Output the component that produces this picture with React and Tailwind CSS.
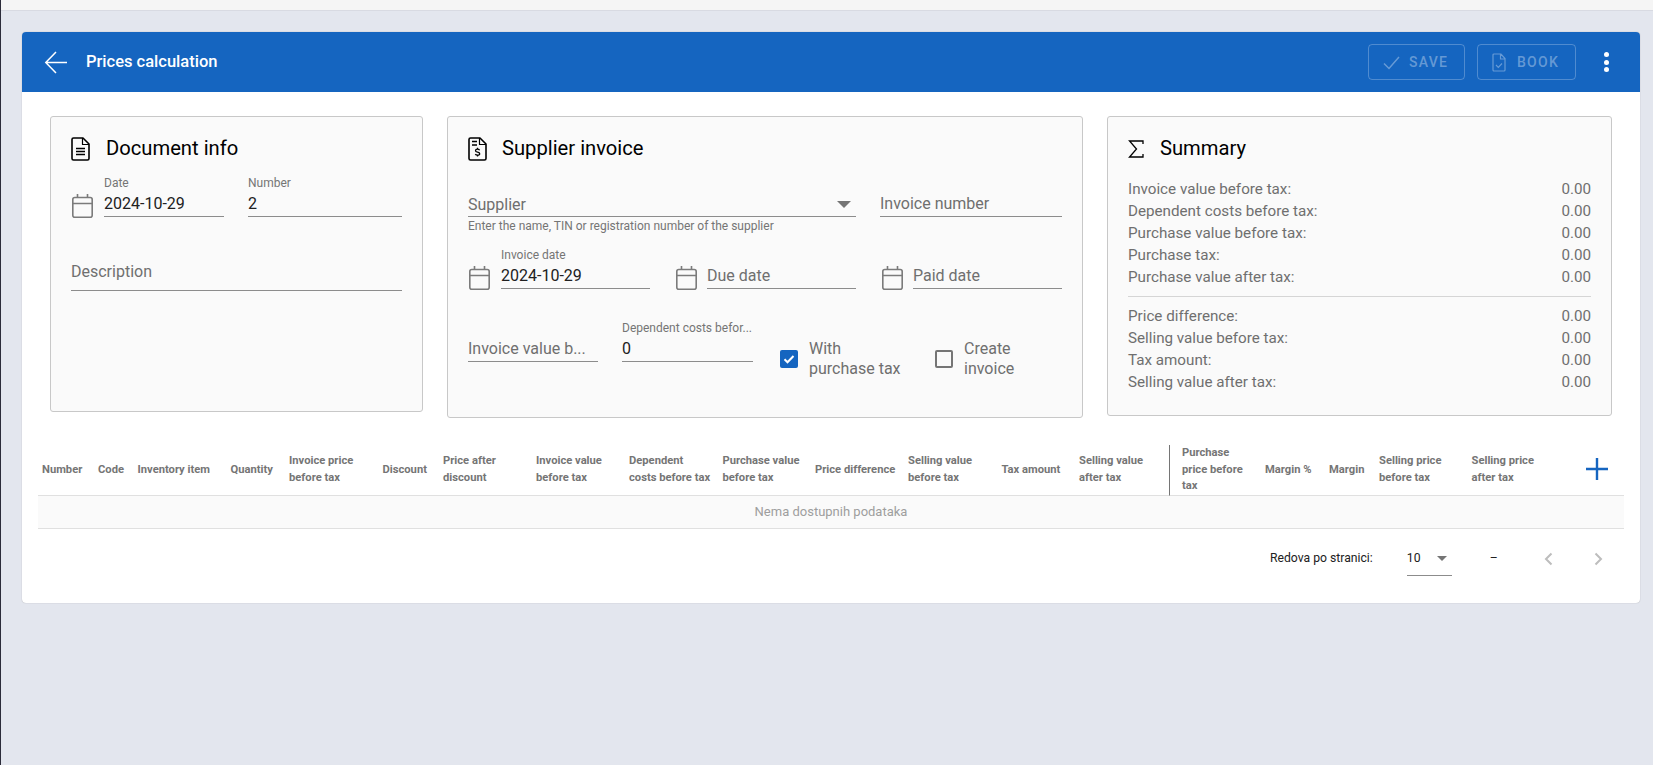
const font = { fontFamily: "Roboto, sans-serif" };

function CalendarIcon() {
  return (
    <svg width="21" height="24" viewBox="0 0 21 24" fill="none" stroke="#7b7b7b" strokeWidth="1.600" className="shrink-0">
      <rect x=".8" y="3.500" width="19.400" height="19.700" rx="2" />
      <path d="M.8 9.500h19.400M5.500 0v3.500M15.500 0v3.500" />
    </svg>
  );
}

function DocIcon() {
  return (
    <svg width="19" height="24" viewBox="0 0 19 24" fill="none" stroke="#000" strokeWidth="1.600" strokeLinejoin="round" className="shrink-0">
      <path d="M2.500 1h9.500l6 6v14.500a1.500 1.500 0 0 1-1.500 1.500h-14A1.500 1.500 0 0 1 1 21.500V2.500A1.500 1.500 0 0 1 2.500 1z" />
      <path d="M11.500 1v6.500H18" strokeWidth="1.200" />
      <path d="M5 11.500h9M5 14.500h9M5 17.500h9" strokeWidth="1.300" />
    </svg>
  );
}

function InvoiceIcon() {
  return (
    <svg width="19" height="24" viewBox="0 0 19 24" fill="none" stroke="#000" strokeWidth="1.600" strokeLinejoin="round" className="shrink-0">
      <path d="M2.500 1h9.500l6 6v14.500a1.500 1.500 0 0 1-1.500 1.500h-14A1.500 1.500 0 0 1 1 21.500V2.500A1.500 1.500 0 0 1 2.500 1z" />
      <path d="M11.500 1v6.500H18" strokeWidth="1.200" />
      <path d="M4 4.500h5M4 8h5" strokeWidth="1.300" />
      <path d="M11.600 13.200c-.4-.7-1.100-1-2.100-1-1.200 0-2 .6-2 1.500 0 2 4.200 1 4.200 3 0 .9-.9 1.500-2.200 1.500-1 0-1.800-.4-2.200-1.100M9.500 10.800v1.400M9.500 18.200v1.400" strokeWidth="1.300" />
    </svg>
  );
}

function Field({ label, value, placeholder, className }) {
  return (
    <div className={`flex flex-col justify-end border-b border-[#8c8c8c] min-w-0 ${className}`}>
      {label && <div className="text-[12px] leading-[14px] text-[#757575] mb-[2px] whitespace-nowrap">{label}</div>}
      {value && <div className="text-[16px] leading-[24px] text-[#212121]">{value}</div>}
      {placeholder && <div className="text-[16px] leading-[24px] text-[#6f6f6f] truncate">{placeholder}</div>}
    </div>
  );
}

function DateField({ label, value, placeholder, className, iconClass = "w-[32px]" }) {
  return (
    <div className={`flex items-end ${className}`}>
      <div className={`${iconClass} shrink-0 pl-[1px] mb-[-1px]`}>
        <CalendarIcon />
      </div>
      <Field label={label} value={value} placeholder={placeholder} className="flex-1" />
    </div>
  );
}

function Check({ checked, children, className }) {
  return (
    <div className={`flex items-center self-start mt-[18px] ${className}`}>
      {checked ? (
        <div className="w-[18px] h-[18px] rounded-[2px] bg-[#1565c0] flex items-center justify-center shrink-0">
          <svg width="14" height="14" viewBox="0 0 14 14" fill="none" stroke="#fff" strokeWidth="2">
            <path d="M2.500 7.200l3 3 6-6.200" />
          </svg>
        </div>
      ) : (
        <div className="w-[18px] h-[18px] rounded-[2px] border-2 border-[#757575] shrink-0" />
      )}
      <div className="ml-[11px] text-[16px] leading-[20px] text-[#6f6f6f]">{children}</div>
    </div>
  );
}

const summaryTop = [
  "Invoice value before tax:",
  "Dependent costs before tax:",
  "Purchase value before tax:",
  "Purchase tax:",
  "Purchase value after tax:",
];
const summaryBottom = [
  "Price difference:",
  "Selling value before tax:",
  "Tax amount:",
  "Selling value after tax:",
];

function SummaryRow({ label }) {
  return (
    <div className="flex justify-between text-[15.2px] leading-[22px] text-[#6f6f6f]">
      <span>{label}</span>
      <span>0.00</span>
    </div>
  );
}

function CardTitle({ icon, children, textClass }) {
  return (
    <div className="flex items-center h-[25px]">
      {icon}
      <h2 className={`text-[20.200px] leading-[25px] text-black ${textClass}`}>{children}</h2>
    </div>
  );
}

const columns = [
  ["Number", "w-[56px]"],
  ["Code", "w-[39.500px]"],
  ["Inventory item", "w-[93px]"],
  ["Quantity", "w-[58.500px]"],
  ["Invoice price\nbefore tax", "w-[93.500px]"],
  ["Discount", "w-[60.500px]"],
  ["Price after\ndiscount", "w-[93px]"],
  ["Invoice value\nbefore tax", "w-[93px]"],
  ["Dependent\ncosts before tax", "w-[93.500px]"],
  ["Purchase value\nbefore tax", "w-[92.500px]"],
  ["Price difference", "w-[93px]"],
  ["Selling value\nbefore tax", "w-[93.500px]"],
  ["Tax amount", "w-[77.500px]"],
  ["Selling value\nafter tax", "w-[94px]"],
  ["Purchase\nprice before\ntax", "w-[92px] border-l border-l-[#757575] !pl-[12px]"],
  ["Margin %", "w-[64px]"],
  ["Margin", "w-[50px]"],
  ["Selling price\nbefore tax", "w-[92.500px]"],
  ["Selling price\nafter tax", "w-[92.500px]"],
];

export default function App() {
  return (
    <div style={font} className="min-h-[765px] bg-[#e3e6ee] border-l border-[#2c2c3a]">
      <div className="h-[11px] bg-[#f5f5f5] border-b border-[#d8dae2]" />
      <div className="pt-[21px] pl-[21px] pr-[13px]">
        <div className="bg-white rounded-[4px] shadow-[0_0_1px_rgba(0,0,0,0.35)] h-[571px]">
          {/* Header */}
          <div className="h-[60px] bg-[#1565c0] rounded-t-[4px] flex items-center pl-[22px] pr-[31px]">
            <svg width="24" height="24" viewBox="0 0 24 24" fill="none" stroke="#fff" strokeWidth="1.500" className="shrink-0">
              <path d="M23 12.500H2M12 2L1.800 12.500 12 23" />
            </svg>
            <h1 className="ml-[18px] text-[16.500px] font-medium text-white flex-1">Prices calculation</h1>
            <button className="w-[97px] h-[36px] rounded-[4px] border border-white/25 flex items-center pl-[14px] text-[14px] font-medium tracking-[1.250px] text-white/35">
              <svg width="17" height="20" viewBox="0 0 17 20" fill="none" stroke="currentColor" strokeWidth="1.500" className="mr-[9px]">
                <path d="M1 11.500l5 5L16 5" />
              </svg>
              SAVE
            </button>
            <button className="ml-[12px] w-[99px] h-[36px] rounded-[4px] border border-white/25 flex items-center pl-[14px] text-[14px] font-medium tracking-[1.250px] text-white/35">
              <svg width="14" height="19" viewBox="0 0 14 19" fill="none" stroke="currentColor" strokeWidth="1.200" className="mr-[11px]">
                <path d="M2 1h7l4 4.500V17a1 1 0 0 1-1 1H2a1 1 0 0 1-1-1V2a1 1 0 0 1 1-1zM8.500 1v5H13" />
                <path d="M4 12l2.300 2.300 3.700-3.800" />
              </svg>
              BOOK
            </button>
            <div className="ml-[28px] w-[5px] flex flex-col gap-[2.500px]">
              <div className="w-[5px] h-[5px] rounded-full bg-white" />
              <div className="w-[5px] h-[5px] rounded-full bg-white" />
              <div className="w-[5px] h-[5px] rounded-full bg-white" />
            </div>
          </div>

          {/* Cards */}
          <div className="flex items-start gap-[24px] pt-[24px] px-[28px]">
            <section className="w-[373px] h-[296px] bg-[#fafafa] border border-[#c8c8c8] rounded-[3px] pt-[19px] px-[20px]">
              <CardTitle icon={<DocIcon />} textClass="ml-[16px]">Document info</CardTitle>
              <div className="flex items-end mt-[15px]">
                <DateField label="Date" value="2024-10-29" className="w-[153px]" iconClass="w-[33px]" />
                <Field label="Number" value="2" className="ml-[24px] flex-1" />
              </div>
              <Field placeholder="Description" className="mt-[43px] pb-[6px]" />
            </section>

            <section className="w-[636px] h-[302px] bg-[#fafafa] border border-[#c8c8c8] rounded-[3px] pt-[19px] px-[20px]">
              <CardTitle icon={<InvoiceIcon />} textClass="ml-[15px]">Supplier invoice</CardTitle>
              <div className="flex mt-[31px] gap-[24px]">
                <div className="w-[388px]">
                  <div className="border-b border-[#8c8c8c] flex items-center justify-between h-[25px]">
                    <span className="text-[16px] text-[#6f6f6f] pt-[1px]">Supplier</span>
                    <span className="mr-[5px] w-0 h-0 border-x-[7.500px] border-x-transparent border-t-[7.500px] border-t-[#757575]" />
                  </div>
                  <p className="text-[12px] leading-[14px] mt-[2px] text-[#757575]">
                    Enter the name, TIN or registration number of the supplier
                  </p>
                </div>
                <Field placeholder="Invoice number" className="flex-1 h-[25px]" />
              </div>
              <div className="flex items-end gap-[25px] mt-[15px]">
                <DateField label="Invoice date" value="2024-10-29" className="w-[182px]" iconClass="w-[33px]" />
                <DateField placeholder="Due date" className="w-[181px]" />
                <DateField placeholder="Paid date" className="flex-1" />
              </div>
              <div className="flex mt-[32px] h-[54px]">
                <Field placeholder="Invoice value b..." className="w-[130px] h-[25px] mt-[16px]" />
                <div className="w-[131px] ml-[24px] h-[41px]">
                  <Field label="Dependent costs befor..." value="0" />
                </div>
                <Check checked className="ml-[27px] w-[155px]">With<br />purchase tax</Check>
                <Check>Create<br />invoice</Check>
              </div>
            </section>

            <section className="w-[505px] h-[300px] bg-[#fafafa] border border-[#c8c8c8] rounded-[3px] pt-[19px] px-[20px]">
              <CardTitle
                icon={
                  <svg width="16" height="18" viewBox="0 0 16 18" fill="none" stroke="#000" strokeWidth="1.300" className="shrink-0">
                    <path d="M15 4V1H1.500L8.500 9l-7 8H15v-3" />
                  </svg>
                }
                textClass="ml-[16px]"
              >
                Summary
              </CardTitle>
              <div className="mt-[17px]">
                {summaryTop.map((s) => <SummaryRow key={s} label={s} />)}
              </div>
              <div className="border-t border-[#d5d5d5] mt-[8px] pt-[8px]">
                {summaryBottom.map((s) => <SummaryRow key={s} label={s} />)}
              </div>
            </section>
          </div>

          {/* Table */}
          <div className="mx-[16px] mt-[27px]">
            <table className="table-fixed w-full border-separate border-spacing-0">
              <thead>
                <tr className="h-[49px]">
                  {columns.map(([name, w]) => (
                    <th key={name} className={`${w} pl-[4px] pr-0 border-b border-b-[#e0e0e0] text-left text-[11.200px] leading-[16.500px] font-bold text-[#757575] whitespace-pre-line`}>
                      {name}
                    </th>
                  ))}
                  <th className="border-b border-b-[#e0e0e0] text-center align-middle">
                    <svg width="22" height="22" viewBox="0 0 22 22" fill="none" stroke="#1565c0" strokeWidth="2.400" className="inline-block align-middle ml-[10px] mb-[2px]">
                      <path d="M11 0v22M0 11h22" />
                    </svg>
                  </th>
                </tr>
              </thead>
              <tbody>
                <tr className="h-[33px] bg-[#fafafa]">
                  <td colSpan={20} className="border-b border-b-[#e0e0e0] text-center text-[13px] text-[#9e9e9e]">Nema dostupnih podataka</td>
                </tr>
              </tbody>
            </table>
          </div>

          {/* Pagination */}
          <div className="flex items-center mx-[16px] mt-[13px] h-[34px] text-[12.200px] text-[#212121]">
            <span className="ml-[1232px]">Redova po stranici:</span>
            <div className="ml-[34px] w-[45px] h-[34px] border-b border-[#8c8c8c] flex items-center justify-between pr-[5px]">
              <span>10</span>
              <span className="w-0 h-0 border-x-[5px] border-x-transparent border-t-[5px] border-t-[#757575]" />
            </div>
            <span className="ml-[38px]">–</span>
            <svg width="16" height="16" viewBox="0 0 16 16" fill="none" stroke="#bdbdbd" strokeWidth="2" className="ml-[43px]">
              <path d="M10.500 2.500L5 8l5.500 5.500" />
            </svg>
            <svg width="16" height="16" viewBox="0 0 16 16" fill="none" stroke="#bdbdbd" strokeWidth="2" className="ml-[33px]">
              <path d="M5.500 2.500L11 8l-5.500 5.500" />
            </svg>
          </div>
        </div>
      </div>
    </div>
  );
}
